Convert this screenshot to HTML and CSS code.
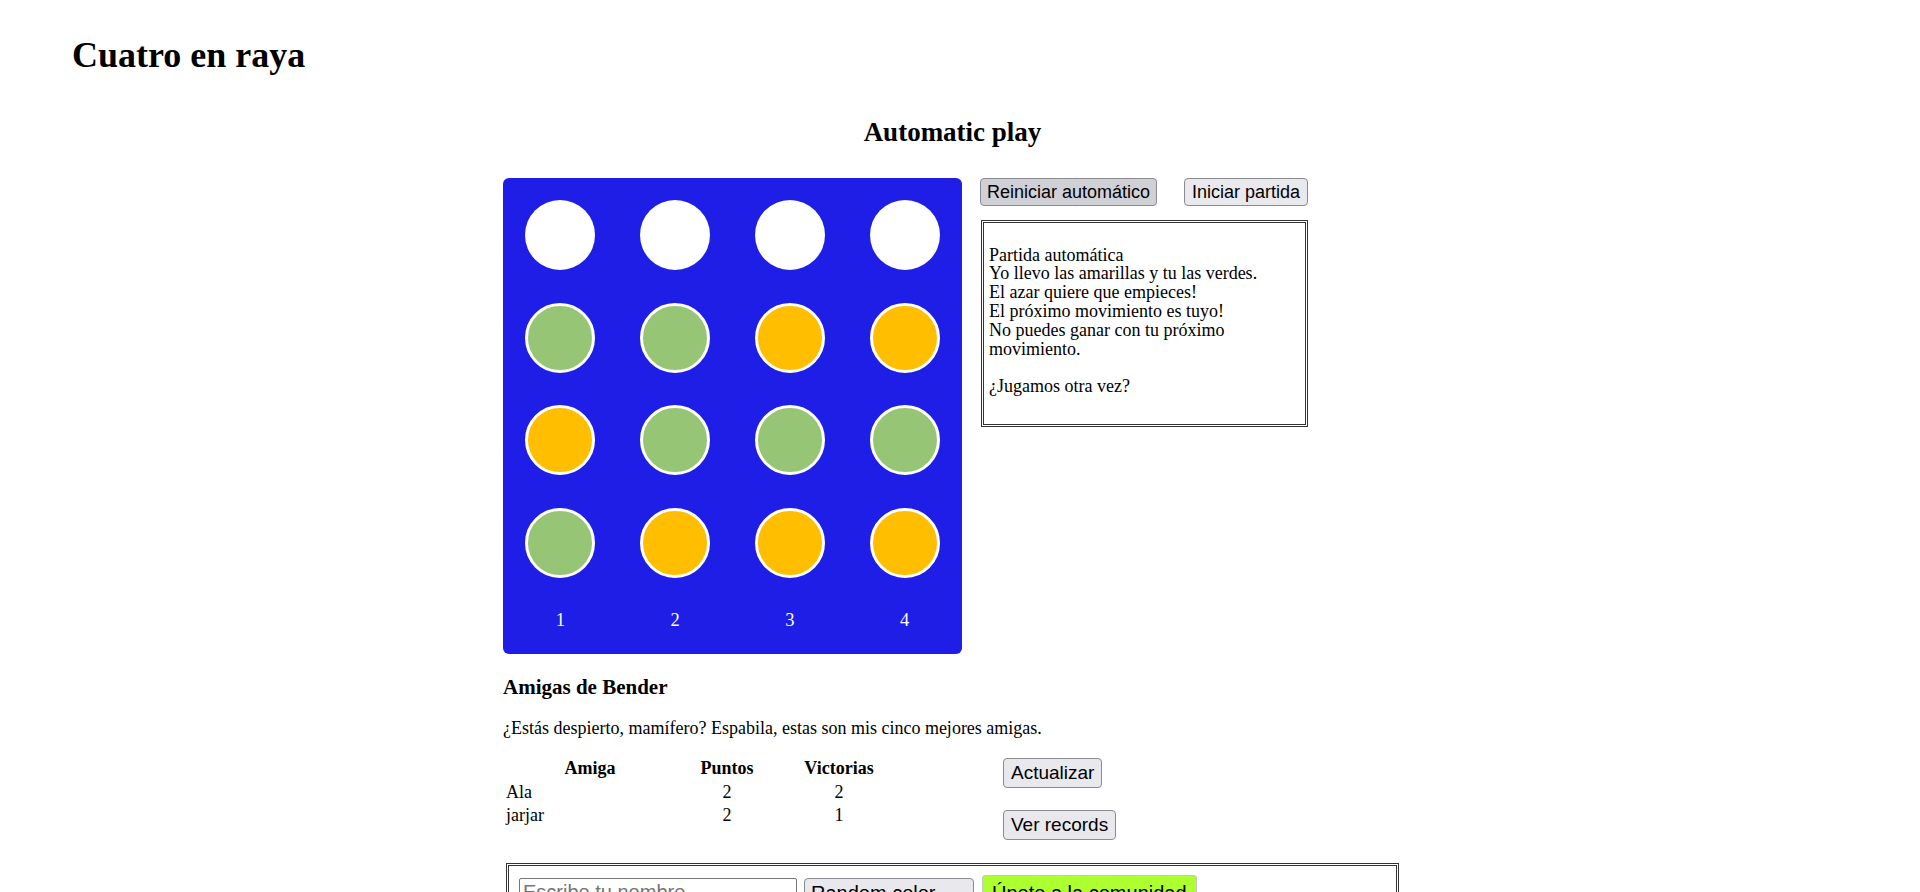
FILE: index.html
```html
<!DOCTYPE html>
<html lang="es">
<head>
<meta charset="utf-8">
<title>Cuatro en raya</title>
<link rel="stylesheet" href="styles.css">
</head>
<body>
<header class="site-header">
  <h1 class="title">Cuatro en raya</h1>
</header>
<main class="main">
  <h2 class="section-title">Automatic play</h2>
  <div class="game">
    <div class="board">
      <div class="cell"><span class="disc disc--empty"></span></div>
      <div class="cell"><span class="disc disc--empty"></span></div>
      <div class="cell"><span class="disc disc--empty"></span></div>
      <div class="cell"><span class="disc disc--empty"></span></div>

      <div class="cell"><span class="disc disc--green"></span></div>
      <div class="cell"><span class="disc disc--green"></span></div>
      <div class="cell"><span class="disc disc--yellow"></span></div>
      <div class="cell"><span class="disc disc--yellow"></span></div>

      <div class="cell"><span class="disc disc--yellow"></span></div>
      <div class="cell"><span class="disc disc--green"></span></div>
      <div class="cell"><span class="disc disc--green"></span></div>
      <div class="cell"><span class="disc disc--green"></span></div>

      <div class="cell"><span class="disc disc--green"></span></div>
      <div class="cell"><span class="disc disc--yellow"></span></div>
      <div class="cell"><span class="disc disc--yellow"></span></div>
      <div class="cell"><span class="disc disc--yellow"></span></div>

      <div class="col-num">1</div>
      <div class="col-num">2</div>
      <div class="col-num">3</div>
      <div class="col-num">4</div>
    </div>
    <div class="side">
      <div class="controls">
        <button class="btn btn--pressed" type="button">Reiniciar automático</button>
        <button class="btn btn--wide" type="button">Iniciar partida</button>
      </div>
      <div class="messages">
        <p class="messages-text">Partida automática<br>Yo llevo las amarillas y tu las verdes.<br>El azar quiere que empieces!<br>El próximo movimiento es tuyo!<br>No puedes ganar con tu próximo movimiento.<br><br>¿Jugamos otra vez?</p>
      </div>
    </div>
  </div>

  <section class="friends">
    <h3 class="friends-title">Amigas de Bender</h3>
    <p class="friends-intro">¿Estás despierto, mamífero? Espabila, estas son mis cinco mejores amigas.</p>
    <div class="friends-row">
      <table class="friends-table">
        <thead>
          <tr><th class="col-name">Amiga</th><th class="col-points">Puntos</th><th class="col-wins">Victorias</th></tr>
        </thead>
        <tbody>
          <tr><td>Ala</td><td class="num">2</td><td class="num">2</td></tr>
          <tr><td>jarjar</td><td class="num">2</td><td class="num">1</td></tr>
        </tbody>
      </table>
      <div class="friends-actions">
        <button class="btn btn--side" type="button">Actualizar</button>
        <button class="btn btn--side" type="button">Ver records</button>
      </div>
    </div>
  </section>

  <form class="join">
    <input class="join-name" type="text" placeholder="Escribe tu nombre">
    <select class="join-color"><option>Random color</option></select>
    <button class="join-btn" type="button">Únete a la comunidad</button>
  </form>
</main>
</body>
</html>
```

FILE: styles.css
```css
body {
  margin: 8px;
  padding-right: 15px;
  font-family: "Liberation Serif", "Times New Roman", serif;
  font-size: 18px;
  line-height: 18.8px;
  color: #000;
  background: #fff;
}

.site-header {
  padding-left: 64px;
}

.title {
  margin: 27.8px 0 0;
  font-size: 36px;
  line-height: 38px;
  font-weight: bold;
}

.main {
  width: 899px;
  margin: 0 auto;
}

.section-title {
  margin: 43.6px 0 0;
  font-size: 27px;
  line-height: 31px;
  font-weight: bold;
  text-align: center;
}

.game {
  display: flex;
  align-items: flex-start;
  gap: 18px;
  margin-top: 29.6px;
}

.board {
  width: 459px;
  height: 476px;
  box-sizing: border-box;
  padding-top: 6px;
  background: #1e1ee6;
  border-radius: 6px;
  display: grid;
  grid-template-columns: repeat(4, 1fr);
  grid-template-rows: repeat(4, 102.5px) 60px;
}

.cell {
  display: flex;
  align-items: center;
  justify-content: center;
}

.disc {
  display: block;
  width: 70px;
  height: 70px;
  box-sizing: border-box;
  border-radius: 50%;
}

.disc--empty {
  background: #fff;
}

.disc--green {
  background: #96c576;
  border: 3px solid #fff;
}

.disc--yellow {
  background: #ffbe00;
  border: 3px solid #fff;
}

.col-num {
  color: #fff;
  text-align: center;
  padding-top: 17.2px;
  line-height: 19px;
  font-size: 18.5px;
}

.side {
  display: flex;
  flex-direction: column;
  gap: 14px;
}

.controls {
  display: flex;
  gap: 27px;
}

.btn {
  font-family: "Liberation Sans", Arial, sans-serif;
  font-size: 18px;
  line-height: 22px;
  padding: 2px 6px;
  border: 1px solid #8a8a93;
  border-radius: 4px;
  background: #e9e9ed;
  color: #000;
}

.btn--pressed {
  background: #d0d0d7;
}

.btn--wide {
  padding: 2px 7px;
}

.btn--side {
  font-size: 19px;
  line-height: 24px;
  padding: 2px 7px;
}

.messages {
  width: 327px;
  height: 207px;
  box-sizing: border-box;
  margin-left: 1px;
  border: 3px double #333;
  padding: 5px;
}

.messages-text {
  margin: 17.6px 0 0;
}

.friends-title {
  margin: 21.6px 0 0;
  font-size: 21px;
  line-height: 23px;
  font-weight: bold;
}

.friends-intro {
  margin: 20px 0 0;
}

.friends-row {
  display: flex;
  align-items: flex-start;
  margin-top: 17.5px;
}

.friends-table {
  border-spacing: 2px;
  border-collapse: separate;
}

.friends-table th {
  padding: 0 1px;
  line-height: 22px;
  font-weight: bold;
  text-align: center;
}

.friends-table td {
  padding: 1px 1px 0;
  line-height: 20px;
}

.friends-table td.num {
  text-align: center;
}

.col-name {
  width: 168px;
}

.col-points {
  width: 98px;
}

.col-wins {
  width: 118px;
}

.friends-actions {
  display: flex;
  flex-direction: column;
  align-items: flex-start;
  gap: 22px;
  padding-top: 2.8px;
  margin-left: 102px;
}

.join {
  margin: 23px 3px 0;
  border: 3px double #333;
  padding: 9px 10px 12px;
  display: flex;
  align-items: center;
  gap: 7px;
}

.join-name {
  width: 278px;
  height: 30px;
  box-sizing: border-box;
  border: 1px solid #767676;
  border-radius: 2px;
  padding: 1px 3px;
  font-family: "Liberation Sans", Arial, sans-serif;
  font-size: 20px;
  margin: 0;
}

.join-name::placeholder {
  color: #757575;
}

.join-color {
  appearance: none;
  width: 170px;
  height: 30px;
  box-sizing: border-box;
  border: 1px solid #8a8a93;
  border-radius: 4px;
  background: #e9e9ed;
  padding: 0 6px;
  font-family: "Liberation Sans", Arial, sans-serif;
  font-size: 20px;
  color: #000;
  margin: 0;
}

.join-btn {
  margin: 0 0 0 1px;
  font-family: "Liberation Sans", Arial, sans-serif;
  font-size: 20px;
  line-height: 24px;
  padding: 5px 9px;
  border: 1px solid #c8c8c8;
  border-radius: 3px;
  background: #adff2f;
  color: #000;
}
```
